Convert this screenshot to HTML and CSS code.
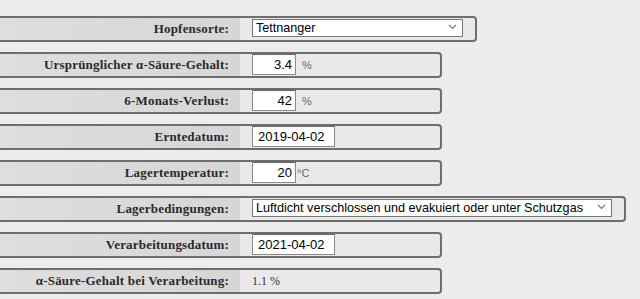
FILE: index.html
```html
<!DOCTYPE html>
<html lang="de">
<head>
    <meta charset="UTF-8">
    <meta name="viewport" content="width=device-width, initial-scale=1.0">
    <title>Hopfen Alterung</title>
    <link rel="stylesheet" href="styles.css">
</head>
<body>
    <div id="form">
        <div class="row">
            <div class="label">Hopfensorte:</div>
            <div class="value">
                <span class="select wide-1">
                    <select id="sorte">
                        <option selected>Tettnanger</option>
                        <option>Hallertauer Mittelfrüh</option>
                        <option>Spalter</option>
                    </select>
                    <svg class="chevron" width="9" height="6" viewBox="0 0 9 6"><path d="M1 1 L4.5 4.5 L8 1" fill="none" stroke="#777" stroke-width="1.2"/></svg>
                </span>
            </div>
        </div>
        <div class="row">
            <div class="label">Ursprünglicher α-Säure-Gehalt:</div>
            <div class="value">
                <input type="text" class="num" value="3.4"><span class="unit">%</span>
            </div>
        </div>
        <div class="row">
            <div class="label">6-Monats-Verlust:</div>
            <div class="value">
                <input type="text" class="num" value="42"><span class="unit">%</span>
            </div>
        </div>
        <div class="row">
            <div class="label">Erntedatum:</div>
            <div class="value">
                <input type="text" class="date" value="2019-04-02">
            </div>
        </div>
        <div class="row">
            <div class="label">Lagertemperatur:</div>
            <div class="value">
                <input type="text" class="num" value="20"><span class="unit tight">°C</span>
            </div>
        </div>
        <div class="row">
            <div class="label">Lagerbedingungen:</div>
            <div class="value">
                <span class="select wide-2">
                    <select id="lager">
                        <option selected>Luftdicht verschlossen und evakuiert oder unter Schutzgas</option>
                        <option>Luftdicht verschlossen</option>
                        <option>Offen gelagert</option>
                    </select>
                    <svg class="chevron" width="9" height="6" viewBox="0 0 9 6"><path d="M1 1 L4.5 4.5 L8 1" fill="none" stroke="#777" stroke-width="1.2"/></svg>
                </span>
            </div>
        </div>
        <div class="row">
            <div class="label">Verarbeitungsdatum:</div>
            <div class="value">
                <input type="text" class="date" value="2021-04-02">
            </div>
        </div>
        <div class="row">
            <div class="label">α-Säure-Gehalt bei Verarbeitung:</div>
            <div class="value">
                <span class="result">1.1 %</span>
            </div>
        </div>
    </div>
</body>
</html>
```

FILE: styles.css
```css
body {
    margin: 0;
    padding: 0;
    background-color: #ececec;
    font-family: 'Liberation Sans', Arial, sans-serif;
    color: #000;
}
#form {
    padding-top: 16px;
}
.row {
    display: flex;
    width: max-content;
    min-width: 440px;
    height: 22px;
    margin-bottom: 10px;
    border: 2px solid #6e6e6e;
    border-left: none;
    border-radius: 0 4px 4px 0;
    background-color: #e9e9e9;
}
.label {
    width: 229px;
    padding-right: 11px;
    background: linear-gradient(to right, #dedede, #d6d6d6);
    font-family: 'Liberation Serif', 'Times New Roman', serif;
    font-weight: bold;
    font-size: 13px;
    letter-spacing: 0.2px;
    color: #2a2a2a;
    text-align: right;
    line-height: 22px;
    white-space: nowrap;
}
.value {
    display: flex;
    align-items: flex-start;
    padding: 0 12px;
}
input {
    box-sizing: border-box;
    height: 21px;
    margin: 0;
    padding: 0 3px;
    border: 1px solid #8a8a8a;
    border-top-color: #6a6a6a;
    background: #fff;
    font-family: 'Liberation Sans', Arial, sans-serif;
    font-size: 13px;
    color: #000;
    outline: none;
}
input.num {
    width: 44px;
    text-align: right;
}
input.date {
    width: 83px;
    text-align: left;
    padding-left: 5px;
}
.unit {
    margin-left: 6px;
    font-size: 11px;
    color: #666;
    line-height: 22px;
}
.unit.tight {
    margin-left: 1px;
}
.select {
    position: relative;
    display: inline-block;
    height: 18px;
}
.select select {
    appearance: none;
    -webkit-appearance: none;
    box-sizing: border-box;
    height: 18px;
    margin: 0;
    padding: 0 16px 0 3px;
    border: 1px solid #777;
    border-radius: 0;
    background: #fff;
    font-family: 'Liberation Sans', Arial, sans-serif;
    font-size: 12.6px;
    line-height: 16px;
    color: #000;
    outline: none;
}
.select.wide-1 select {
    width: 211px;
}
.select.wide-2 select {
    width: 360px;
}
.chevron {
    position: absolute;
    right: 6px;
    top: 6px;
}
.result {
    font-family: 'Liberation Serif', 'Times New Roman', serif;
    font-size: 12px;
    color: #333;
    line-height: 22px;
}
```
